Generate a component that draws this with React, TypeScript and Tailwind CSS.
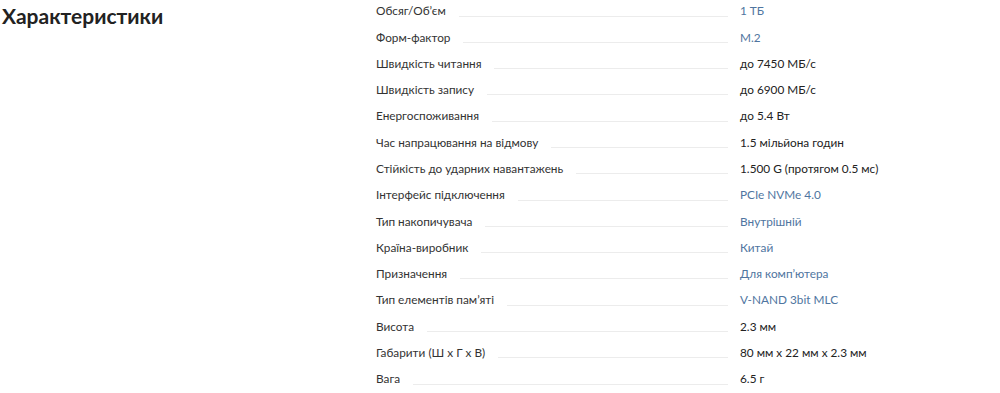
const specs: { label: string; value: string; link?: boolean }[] = [
  { label: 'Обсяг/Об\u2019єм', value: '1 ТБ', link: true },
  { label: 'Форм-фактор', value: 'M.2', link: true },
  { label: 'Швидкість читання', value: 'до 7450 МБ/с' },
  { label: 'Швидкість запису', value: 'до 6900 МБ/с' },
  { label: 'Енергоспоживання', value: 'до 5.4 Вт' },
  { label: 'Час напрацювання на відмову', value: '1.5 мільйона годин' },
  { label: 'Стійкість до ударних навантажень', value: '1.500 G (протягом 0.5 мс)' },
  { label: 'Інтерфейс підключення', value: 'PCIe NVMe 4.0', link: true },
  { label: 'Тип накопичувача', value: 'Внутрішній', link: true },
  { label: 'Країна-виробник', value: 'Китай', link: true },
  { label: 'Призначення', value: 'Для комп\u2019ютера', link: true },
  { label: 'Тип елементів пам\u2019яті', value: 'V-NAND 3bit MLC', link: true },
  { label: 'Висота', value: '2.3 мм' },
  { label: 'Габарити (Ш x Г x В)', value: '80 мм x 22 мм x 2.3 мм' },
  { label: 'Вага', value: '6.5 г' },
];

export default function App() {
  return (
    <div className="flex w-[1000px] h-[393px] overflow-hidden bg-white font-['Lato',sans-serif] text-[#222]">
      <h2 className="w-[376px] shrink-0 pl-[2px] pt-[4px] text-[21px] font-bold leading-[24px]">
        Характеристики
      </h2>
      <dl className="w-[524px] -mt-[2px]">
        {specs.map((s) => (
          <div key={s.label} className="flex items-center h-[26.29px] text-[11.8px]">
            <dt className="shrink-0 text-[#333]">{s.label}</dt>
            <span className="flex-1 h-px mt-[10px] mx-[13px] bg-[#ececec]" />
            <dd className={`w-[160px] shrink-0 ml-[-1px] ${s.link ? 'text-[#4f75a0]' : 'text-[#222]'}`}>
              {s.value}
            </dd>
          </div>
        ))}
      </dl>
    </div>
  );
}
